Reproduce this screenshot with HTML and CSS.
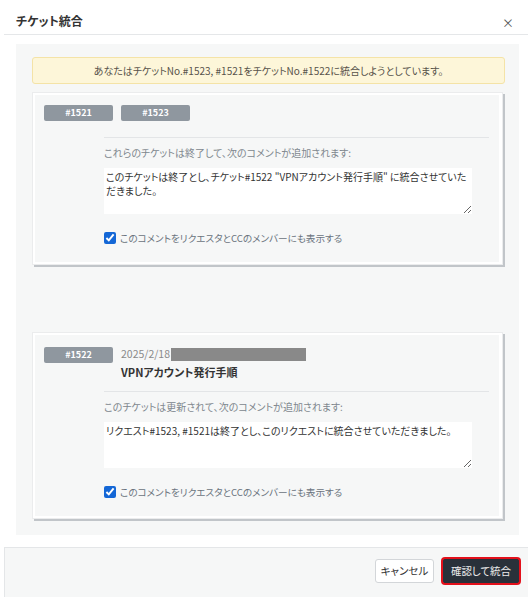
FILE: index.html
```html
<!DOCTYPE html>
<html lang="ja">
<head>
<meta charset="utf-8">
<title>チケット統合</title>
<link rel="stylesheet" href="styles.css">
</head>
<body>
<div class="dialog">
  <div class="dialog-header">
    <h1 class="dialog-title">チケット統合</h1>
    <span class="dialog-close">×</span>
  </div>
  <div class="dialog-body">
    <div class="panel">
      <div class="alert">あなたはチケットNo.#1523, #1521をチケットNo.#1522に統合しようとしています。</div>

      <div class="card card-sources">
        <div class="card-inner">
          <div class="card-head">
            <span class="badge">#1521</span>
            <span class="badge">#1523</span>
          </div>
          <div class="card-section">
            <div class="section-label">これらのチケットは終了して、次のコメントが追加されます:</div>
            <textarea class="comment">このチケットは終了とし、チケット#1522 "VPNアカウント発行手順" に統合させていただきました。</textarea>
            <label class="check-row"><input type="checkbox" checked><span>このコメントをリクエスタとCCのメンバーにも表示する</span></label>
          </div>
        </div>
      </div>

      <div class="card card-target">
        <div class="card-inner">
          <div class="card-head">
            <span class="badge badge-offset">#1522</span>
            <div class="meta">
              <div class="meta-date">2025/2/18<span class="redacted"></span></div>
              <div class="meta-title">VPNアカウント発行手順</div>
            </div>
          </div>
          <div class="card-section">
            <div class="section-label">このチケットは更新されて、次のコメントが追加されます:</div>
            <textarea class="comment">リクエスト#1523, #1521は終了とし、このリクエストに統合させていただきました。</textarea>
            <label class="check-row"><input type="checkbox" checked><span>このコメントをリクエスタとCCのメンバーにも表示する</span></label>
          </div>
        </div>
      </div>
    </div>
  </div>
  <div class="dialog-footer">
    <button class="btn btn-default">キャンセル</button>
    <button class="btn btn-primary">確認して統合</button>
  </div>
</div>
</body>
</html>
```

FILE: styles.css
```css
html, body {
  margin: 0;
  padding: 0;
  background: #ffffff;
  overflow: hidden;
}

body {
  font-family: "Noto Sans CJK JP", "Noto Sans", sans-serif;
  font-feature-settings: "palt";
  color: #333333;
  font-size: 10px;
}

.dialog {
  margin-left: 4px;
  width: 527px;
  height: 597px;
  display: flex;
  flex-direction: column;
}

.dialog-header {
  height: 34px;
  border-bottom: 1px solid #e5e7e9;
  display: flex;
  justify-content: space-between;
  align-items: flex-start;
  padding: 0 17px 0 12px;
}

.dialog-title {
  margin: 11px 0 0 0;
  font-size: 12px;
  line-height: 20px;
  font-weight: 700;
  color: #333333;
}

.dialog-close {
  margin-top: 14px;
  font-size: 12px;
  line-height: 18px;
  color: #555555;
}

.dialog-body {
  padding: 9px 12px 12px;
}

.panel {
  background: #f6f7f7;
  padding: 13px 14px 16px 16px;
}

.alert {
  height: 25px;
  line-height: 25px;
  background: #fdf6d9;
  border: 1px solid #f4e3a7;
  border-radius: 3px;
  text-align: center;
  color: #57524a;
  font-size: 10px;
}

.card {
  margin-right: 2px;
  background: #ffffff;
  border: 1px solid #ebeced;
  padding: 2px 3px 2px 2px;
  box-shadow: 2px 2px 0 #c1c5c9;
}

.card-sources {
  margin-top: 8px;
}

.card-target {
  margin-top: 67px;
}

.card-inner {
  background: #f6f7f7;
  padding: 10px 10px 17px 9px;
}

.card-head {
  display: flex;
  gap: 8px;
  align-items: flex-start;
}

.card-sources .card-head {
  min-height: 22px;
}

.badge {
  display: inline-block;
  width: 69px;
  height: 16px;
  line-height: 16px;
  text-align: center;
  background: #8f979f;
  color: #ffffff;
  font-size: 9px;
  font-weight: 700;
  border-radius: 2px;
}

.badge-offset {
  margin-top: 2px;
}

.meta-date {
  line-height: 18px;
  color: #8a8a8a;
  font-size: 10.5px;
  display: flex;
  align-items: center;
}

.redacted {
  display: inline-block;
  width: 135px;
  height: 13px;
  background: #898989;
  margin-left: 1px;
}

.meta-title {
  line-height: 18px;
  font-weight: 700;
  font-size: 11px;
  color: #333333;
}

.card-section {
  margin-left: 60px;
  margin-top: 10px;
  border-top: 1px solid #e3e5e7;
  padding-top: 7px;
}

.section-label {
  line-height: 16px;
  color: #80878e;
  font-size: 10px;
}

.comment {
  display: block;
  margin-top: 7px;
  width: 368px;
  height: 46px;
  box-sizing: border-box;
  border: none;
  background: #ffffff;
  padding: 2px 2px;
  font-family: "Noto Sans CJK JP", "Noto Sans", sans-serif;
  font-feature-settings: "palt";
  font-size: 10px;
  line-height: 14px;
  color: #333333;
  resize: vertical;
  outline: none;
}

.check-row {
  display: flex;
  align-items: center;
  gap: 4px;
  margin-top: 17px;
  line-height: 14px;
  color: #6a737d;
  font-size: 9.6px;
}

.check-row input {
  margin: 0;
  width: 12px;
  height: 12px;
  accent-color: #1467d6;
}

.dialog-footer {
  flex: 1;
  background: #f6f7f7;
  border-top: 1px solid #e4e6e8;
  border-left: 1px solid #e4e6e8;
  display: flex;
  justify-content: flex-end;
  align-items: flex-start;
  gap: 9px;
  padding: 11px 12px 0 0;
}

.btn {
  height: 24px;
  font-family: "Noto Sans CJK JP", "Noto Sans", sans-serif;
  font-feature-settings: "palt";
  font-size: 10.5px;
  border-radius: 3px;
  padding: 0;
  line-height: 22px;
  white-space: nowrap;
  text-align: center;
}

.btn-default {
  width: 59px;
  background: #ffffff;
  border: 1px solid #d3d6d9;
  color: #333333;
}

.btn-primary {
  width: 76px;
  background: #29313a;
  border: 1px solid #29313a;
  color: #ececec;
  border-radius: 2px;
  box-shadow: 0 0 0 2px #e3101b;
}
```
